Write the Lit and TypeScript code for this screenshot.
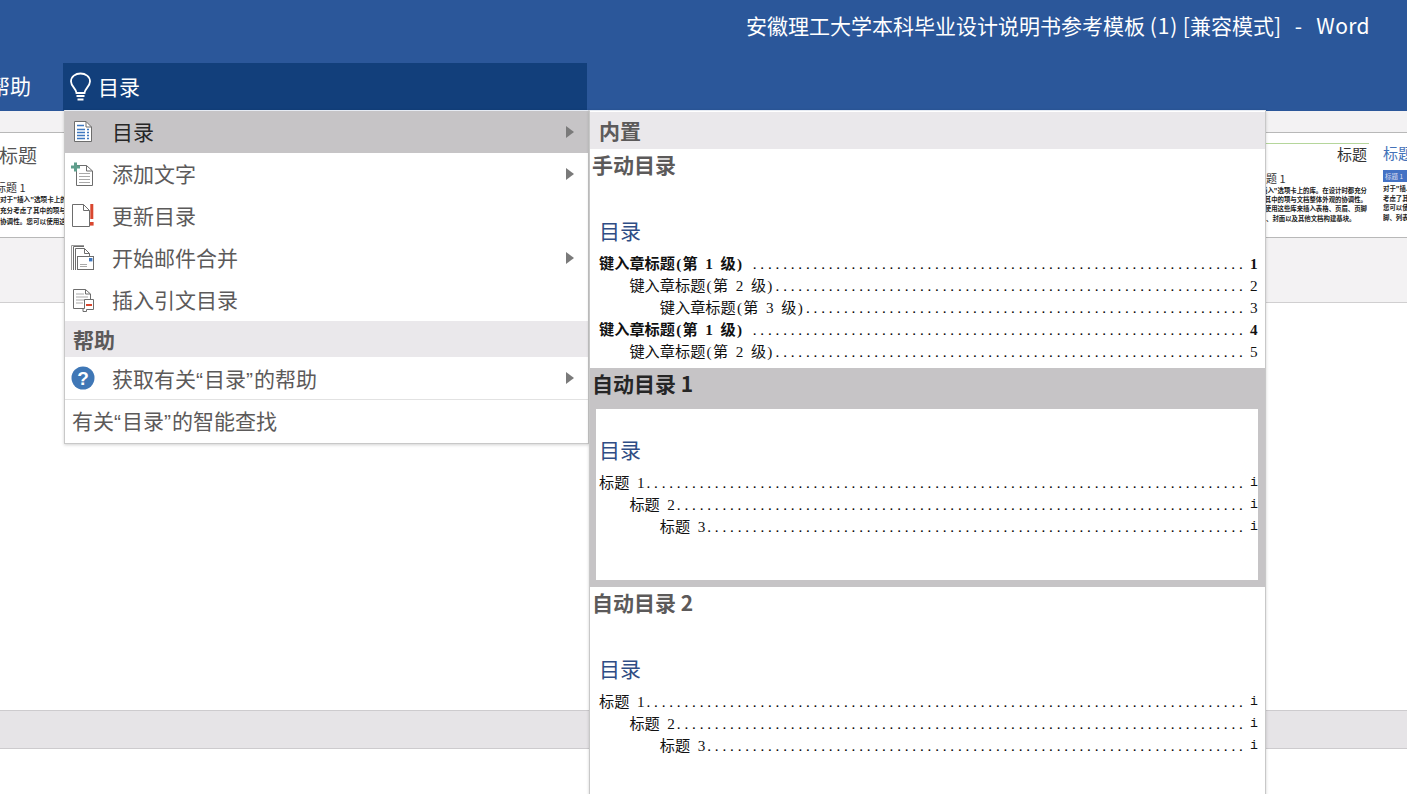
import { LitElement, html, css, svg } from "lit";
import { customElement } from "lit/decorators.js";

const stroke = "#6d6d6d";
const icons: Record<string, unknown> = {
  toc: svg`<path d="M4.5 2.5H16L21.5 8V22.5H4.5Z" fill="#fff" stroke="${stroke}"/><path d="M16 2.5V8H21.5" fill="none" stroke="${stroke}"/><path d="M7 6.5H14M7 10.5H15M7 13.5H15M7 16.5H15M7 19.5H15" stroke="#3f78c0" stroke-width="1.3"/><path d="M17 10.5H19M17 13.5H19M17 16.5H19M17 19.5H19" stroke="#3f78c0" stroke-width="1.3"/>`,
  add: svg`<path d="M6.5 4.5H16.5L22.5 10V24.5H6.5Z" fill="#fff" stroke="${stroke}"/><path d="M16.5 4.5V10H22.5" fill="none" stroke="${stroke}"/><path d="M9 12.5H20M9 15.5H20M9 18.5H20M9 21.5H20" stroke="#a9a9a9"/><path d="M1 6H10M5.5 1.5V10.5" stroke="#5f9e8c" stroke-width="3"/>`,
  upd: svg`<path d="M2.5 1.5H13.5L19.5 7.5V23.5H2.5Z" fill="#fff" stroke="${stroke}"/><path d="M13.5 1.5V7.5H19.5" fill="none" stroke="${stroke}"/><path d="M21.8 1V16" stroke="#d9472f" stroke-width="3"/><rect x="20" y="19" width="3.6" height="3.6" fill="#d9472f"/>`,
  mail: svg`<path d="M3.5 25V1.5H14" fill="none" stroke="${stroke}"/><path d="M1.5 25V0.5H14" fill="none" stroke="#9a9a9a"/><path d="M5.5 25V3.5H14.5L19.5 8.5V11" fill="none" stroke="${stroke}"/><path d="M14.5 3.5V8.5H19.5" fill="none" stroke="${stroke}"/><rect x="7.5" y="11.5" width="16" height="13" fill="#fff" stroke="${stroke}"/><rect x="19" y="13" width="3.4" height="3.4" fill="#3f78c0"/><path d="M10 19.5H17M10 21.5H17" stroke="#a9a9a9"/>`,
  cite: svg`<path d="M3.5 2.5H15.5L20.5 7V21.5H3.5Z" fill="#fff" stroke="${stroke}"/><path d="M15.5 2.5V7H20.5" fill="none" stroke="${stroke}"/><path d="M6 7H14M6 10H18M6 13H18M6 16H13" stroke="#a9a9a9"/><path d="M14.5 12.5H23.5V22.5H16.5V24.5H13V21.5H14.5Z" fill="#fff" stroke="${stroke}"/><path d="M16 18H22" stroke="#d9472f" stroke-width="2"/>`,
  help: svg`<circle cx="13" cy="13" r="11.5" fill="#3f77b6"/><text x="13" y="20" text-anchor="middle" fill="#fff" font-size="19" font-weight="700" font-family="Liberation Sans">?</text>`,
};

type Row = { label: string; num: string; lvl: number; bold?: boolean };

const CELL = 7.6;
const DOTS_END = 649.5;

function labelWidth(label: string) {
  let w = 0;
  for (const ch of label) w += ch.charCodeAt(0) < 128 ? CELL : CELL * 2;
  return w;
}

@customElement("app-root")
export class AppRoot extends LitElement {
  static styles = css`
    :host { display: block; position: relative; width: 1407px; height: 794px; overflow: hidden; background: #fff;
      font-family: "Noto Sans CJK SC", "Noto Sans", sans-serif; }
    .head { height: 111px; background: #2b579a; color: #fff; display: flex; flex-direction: column; box-sizing: border-box; }
    .title { height: 63px; display: flex; justify-content: flex-end; align-items: center; padding: 0 37px 14px 0; font-size: 21px; box-sizing: border-box; white-space: pre; }
    .t1 { letter-spacing: 0.8px; }
    .t2 { word-spacing: 1.8px; letter-spacing: 0.4px; }
    .tabs { display: flex; height: 47px; align-items: center; }
    .tab { margin: -4px 0 0 -11px; width: 74px; font-size: 21px; flex: none; }
    .tell { width: 524px; height: 47px; background: #123f7b; display: flex; align-items: center; gap: 5px; padding-left: 6px; box-sizing: border-box; font-size: 21px; }
    .tell svg { flex: none; }
    .tell span { margin-top: -2px; }
    .ribbon { height: 192px; background: #f3f2f3; border-bottom: 1px solid #d0cfd0; padding-top: 21px; box-sizing: border-box; }
    .gal { height: 106px; background: #fff; border-top: 1px solid #b8b8b8; border-bottom: 1px solid #b8b8b8; box-sizing: border-box; display: flex; overflow: hidden; }
    .card { flex: none; height: 84px; margin-top: 10px; overflow: hidden; box-sizing: border-box; color: #333; }
    .c1 { width: 64px; color: #555; }
    .c1 .h { font-size: 19px; line-height: 26px; margin-top: -1px; margin-left: -1px; }
    .c1 .s { font-size: 11px; line-height: 13px; margin: 13px 0 0 -5px; white-space: nowrap; color: #333; }
    .b { font-size: 6.6px; line-height: 11px; font-weight: 700; white-space: nowrap; color: #222; }
    .spacer { flex: 1; }
    .c2 { width: 103px; border-top: 1px solid #b5d69b; margin-right: 14px; }
    .c2 .h { font-size: 15px; line-height: 22px; text-align: right; margin: -1px 0 0; color: #333; padding-right: 2px; }
    .c2 .s { font-size: 11px; line-height: 14px; margin-top: 6px; }
    .c2 .b { font-size: 6.4px; line-height: 9.2px; display: flex; justify-content: flex-end; padding-right: 2px; }
    .c2 .b.first { margin-top: 1px; }
    .c2 .b.lft { justify-content: flex-start; }
    .c3 { width: 25px; margin-right: -1px; }
    .c3 .h { font-size: 15px; line-height: 20px; color: #4472b8; white-space: nowrap; }
    .c3 .s { background: #4472c4; color: #dde; font-size: 6.5px; line-height: 12px; margin-top: 7px; white-space: nowrap; overflow: hidden; padding-left: 2px; }
    .c3 .b { font-size: 6.4px; line-height: 9.5px; overflow: hidden; }
    .c3 .b.first { margin-top: 2px; }
    .doc { height: 407px; background: #fff; }
    .band { height: 39px; background: #e6e4e7; border-top: 1px solid #cdcbce; border-bottom: 1px solid #cdcbce; box-sizing: border-box; }

    .menu { position: absolute; left: 64px; top: 110px; width: 525px; height: 334px; box-sizing: border-box; background: #fff; border: 1px solid #c8c8c8; border-top-color: #e6ebf3; box-shadow: 0 1px 3px rgba(0,0,0,.18); color: #5c5a5a; font-size: 21px; }
    .item { height: 42px; display: flex; align-items: center; padding-left: 5px; gap: 16px; position: relative; }
    .item > span { margin-top: -2px; }
    .item.sel { background: #c6c4c6; color: #262626; }
    .item svg.ic { flex: none; }
    .arrow { position: absolute; right: 14px; top: 50%; margin-top: -6px; }
    .sec { height: 36px; background: #eae8eb; font-weight: 700; padding-left: 8px; line-height: 36px; color: #5c5a5a; }
    .item.hp { height: 43px; border-bottom: 1px solid #e2e2e2; box-sizing: border-box; }
    .item.hp > span { margin-top: 0; }
    .smart { height: 42px; line-height: 41px; padding-left: 7px; color: #5c5a5a; }
    .q { font-family: "Liberation Sans", sans-serif; margin-right: 1px; }

    .panel { position: absolute; left: 589px; top: 110px; width: 677px; height: 700px; box-sizing: border-box; background: #fff; border: 1px solid #c8c8c8; border-top-color: #e6ebf3; border-bottom: 0; box-shadow: 0 1px 3px rgba(0,0,0,.18); font-size: 21px; color: #5c5a5a; }
    .phead { height: 37px; margin-top: 1px; padding-left: 9px; line-height: 36px; background: #eae8eb; font-weight: 700; }
    .gs { box-sizing: border-box; padding: 0 6px; height: 219px; }
    .gs.sel { background: #c6c4c6; color: #262626; }
    .gt { height: 41px; margin: 0 -4px; font-weight: 700; line-height: 30px; }
    .pv { height: 171px; width: 662px; background: #fff; padding-top: 28px; box-sizing: border-box; overflow: hidden; }
    .pt { font-size: 21px; line-height: 24px; color: #2f4d85; padding-left: 3px; margin-bottom: 11px; }
    .row { display: flex; height: 22px; line-height: 22px; font-size: 15.2px; color: #111; white-space: pre; font-family: "Liberation Serif", "Noto Sans CJK SC", serif; }
    .row.bold { font-weight: 700; }
    .l { display: inline-block; width: 7.6px; text-align: center; }
    .dots { flex: 1; min-width: 0; overflow: hidden; padding-left: 1.9px; letter-spacing: 3.8px; color: #000; font-weight: 400; }
    .num { flex: none; width: 8px; text-align: left; }
    .num.mono { font-family: "Liberation Mono", monospace; font-size: 13.3px; font-weight: 400; color: #111; }
  `;

  private icon(k: string) {
    return html`<svg class="ic" width="26" height="26" viewBox="0 0 26 26">${icons[k]}</svg>`;
  }

  private arrow() {
    return html`<svg class="arrow" width="8" height="12" viewBox="0 0 8 12"><path d="M0 0L8 6L0 12Z" fill="#7a7a7a"/></svg>`;
  }

  private item(k: string, label: unknown, opts: { arrow?: boolean; sel?: boolean; hp?: boolean } = {}) {
    return html`<div class="item ${opts.sel ? "sel" : ""} ${opts.hp ? "hp" : ""}">${this.icon(k)}<span>${label}</span>${opts.arrow ? this.arrow() : ""}</div>`;
  }

  private label(s: string) {
    return Array.from(s).map((c) =>
      c.charCodeAt(0) < 128 ? html`<span class="l">${c}</span>` : html`<span>${c}</span>`
    );
  }

  private row(r: Row) {
    const left = 3 + r.lvl * 30.4;
    const text = r.bold ? r.label + " " : r.label;
    const n = Math.floor((DOTS_END - left - labelWidth(text)) / CELL);
    return html`<div class="row ${r.bold ? "bold" : ""}" style="padding-left:${left}px"><span>${this.label(text)}</span><span class="dots">${".".repeat(n)}</span><span class="num ${r.num === "i" ? "mono" : ""}">${r.num}</span></div>`;
  }

  private section(title: string, rows: Row[], sel = false) {
    return html`<div class="gs ${sel ? "sel" : ""}">
      <div class="gt">${title}</div>
      <div class="pv">
        <div class="pt">目录</div>
        ${rows.map((r) => this.row(r))}
      </div>
    </div>`;
  }

  render() {
    const manual: Row[] = [
      { label: "键入章标题(第 1 级)", num: "1", lvl: 0, bold: true },
      { label: "键入章标题(第 2 级)", num: "2", lvl: 1 },
      { label: "键入章标题(第 3 级)", num: "3", lvl: 2 },
      { label: "键入章标题(第 1 级)", num: "4", lvl: 0, bold: true },
      { label: "键入章标题(第 2 级)", num: "5", lvl: 1 },
    ];
    const auto: Row[] = [
      { label: "标题 1", num: "i", lvl: 0 },
      { label: "标题 2", num: "i", lvl: 1 },
      { label: "标题 3", num: "i", lvl: 2 },
    ];
    return html`
      <div class="head">
        <div class="title"><span>安徽理工大学本科毕业设计说明书参考模板 <span class="t1">(1)</span> [兼容模式]<span class="t2">  -  Word</span></span></div>
        <div class="tabs">
          <div class="tab">帮助</div>
          <div class="tell">
            <svg width="24" height="30" viewBox="0 0 24 30"><path d="M7.5 21C7.5 17 2 14.5 2 9.5C2 4.5 6.5 1.5 11.5 1.5C16.5 1.5 21 4.5 21 9.5C21 14.5 15.5 17 15.5 21Z" fill="none" stroke="#fff" stroke-width="1.8"/><path d="M7.5 24H15.5M8.5 27.5H14.5" stroke="#fff" stroke-width="1.8"/></svg>
            <span>目录</span>
          </div>
        </div>
      </div>
      <div class="ribbon">
        <div class="gal">
          <div class="card c1">
            <div class="h">标题</div>
            <div class="s">标题 1</div>
            <div class="b">对于"插入"选项卡上的库</div>
            <div class="b">充分考虑了其中的项与文</div>
            <div class="b">协调性。您可以使用这些</div>
            <div class="b">眉、页脚、列表、封面以</div>
          </div>
          <div class="spacer"></div>
          <div class="card c2">
            <div class="h">标题</div>
            <div class="s">题 1</div>
            <div class="b first"><span>对于"插入"选项卡上的库。在设计时都充分</span></div>
            <div class="b"><span>考虑了其中的项与文档整体外观的协调性。</span></div>
            <div class="b"><span>您可以使用这些库来插入表格、页眉、页脚</span></div>
            <div class="b lft"><span>、封面以及其他文档构建基块。</span></div>
          </div>
          <div class="card c3">
            <div class="h">标题</div>
            <div class="s">标题 1</div>
            <div class="b first">对于"插入"选</div>
            <div class="b">考虑了其中</div>
            <div class="b">您可以使用</div>
            <div class="b">脚、列表</div>
          </div>
        </div>
      </div>
      <div class="doc"></div>
      <div class="band"></div>

      <div class="menu">
        ${this.item("toc", "目录", { arrow: true, sel: true })}
        ${this.item("add", "添加文字", { arrow: true })}
        ${this.item("upd", "更新目录")}
        ${this.item("mail", "开始邮件合并", { arrow: true })}
        ${this.item("cite", "插入引文目录")}
        <div class="sec">帮助</div>
        ${this.item("help", html`获取有关<span class="q">“</span>目录<span class="q">”</span>的帮助`, { arrow: true, hp: true })}
        <div class="smart">有关<span class="q">“</span>目录<span class="q">”</span>的智能查找</div>
      </div>

      <div class="panel">
        <div class="phead">内置</div>
        ${this.section("手动目录", manual)}
        ${this.section("自动目录 1", auto, true)}
        ${this.section("自动目录 2", auto)}
      </div>
    `;
  }
}
